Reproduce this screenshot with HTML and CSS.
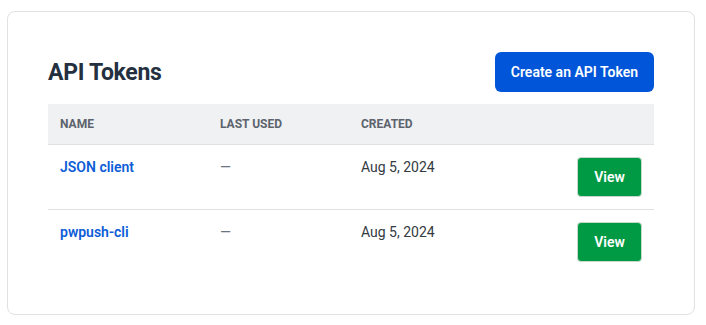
FILE: index.html
```html
<!DOCTYPE html>
<html lang="en">
<head>
  <meta charset="UTF-8">
  <title>API Tokens</title>
  <link rel="stylesheet" href="styles.css">
</head>
<body>
  <div class="card">
    <div class="card-head">
      <h1>API Tokens</h1>
      <a class="btn btn-primary" href="#">Create an API Token</a>
    </div>

    <table class="tokens">
      <thead>
        <tr>
          <th class="col-name">Name</th>
          <th class="col-used">Last Used</th>
          <th class="col-created">Created</th>
          <th></th>
        </tr>
      </thead>
      <tbody>
        <tr>
          <td><a href="#">JSON client</a></td>
          <td class="muted">—</td>
          <td>Aug 5, 2024</td>
          <td class="actions"><a class="btn btn-view" href="#">View</a></td>
        </tr>
        <tr>
          <td><a href="#">pwpush-cli</a></td>
          <td class="muted">—</td>
          <td>Aug 5, 2024</td>
          <td class="actions"><a class="btn btn-view" href="#">View</a></td>
        </tr>
      </tbody>
    </table>
  </div>
</body>
</html>
```

FILE: styles.css
```css
* {
  margin: 0;
  padding: 0;
  box-sizing: border-box;
}

body {
  font-family: Roboto, 'Liberation Sans', sans-serif;
  background-color: #ffffff;
  color: #2d333a;
  padding: 11px 11px 10px 7px;
}

.card {
  border: 1px solid #dfe1e4;
  border-radius: 8px;
  padding: 40px 40px 38px 40px;
  height: 304px;
}

.card-head {
  display: flex;
  align-items: center;
  justify-content: space-between;
  margin-bottom: 12px;
}

.card-head h1 {
  font-size: 23px;
  font-weight: 700;
  color: #243040;
  letter-spacing: -0.3px;
}

.btn {
  display: inline-flex;
  align-items: center;
  justify-content: center;
  text-decoration: none;
  color: #ffffff;
  font-weight: 600;
  font-size: 14px;
}

.btn-primary {
  background-color: #0055d8;
  height: 40px;
  padding: 0 16px;
  border-radius: 6px;
}

.btn-view {
  background-color: #009a45;
  border: 1px solid #c8d8cd;
  height: 40px;
  width: 65px;
  border-radius: 4px;
}

.tokens {
  width: 100%;
  border-collapse: collapse;
}

.tokens th {
  background-color: #f0f1f3;
  text-align: left;
  font-size: 12px;
  font-weight: 700;
  text-transform: uppercase;
  color: #5c636c;
  height: 40px;
  padding: 0 12px;
  border-bottom: 1px solid #dfe1e4;
}

.col-name { width: 160px; }
.col-used { width: 141px; }
.col-created { width: 150px; }

.tokens td {
  font-size: 14px;
  padding: 14px 12px 0 12px;
  height: 65px;
  vertical-align: top;
  color: #333a42;
}

.tokens tbody tr:first-child td {
  border-bottom: 1px solid #dfe1e4;
}

.tokens td a {
  color: #0d5dd7;
  text-decoration: none;
  font-weight: 600;
}

.tokens td.muted {
  color: #6b7280;
}

.tokens td.actions {
  text-align: right;
  padding-top: 12px;
}

.tokens td.actions .btn-view {
  color: #ffffff;
}
```
